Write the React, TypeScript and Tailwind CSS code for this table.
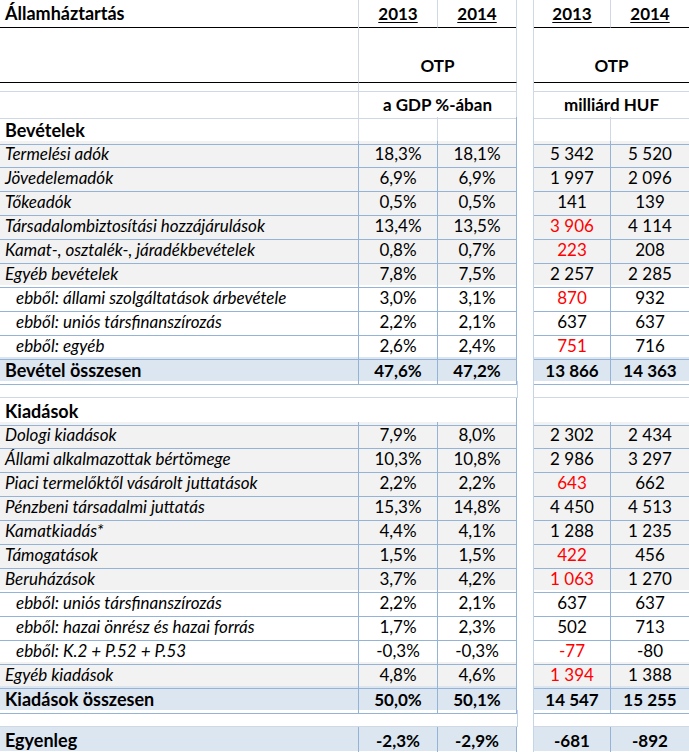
import React from 'react'

type Kind = 'main' | 'sub' | 'total' | 'section' | 'spacer'

type Row = {
  kind: Kind
  label?: string
  v?: [string, string, string, string]
  red?: boolean
}

const rows: Row[] = [
  { kind: 'section', label: 'Bevételek' },
  { kind: 'main', label: 'Termelési adók', v: ['18,3%', '18,1%', '5 342', '5 520'] },
  { kind: 'main', label: 'Jövedelemadók', v: ['6,9%', '6,9%', '1 997', '2 096'] },
  { kind: 'main', label: 'Tőkeadók', v: ['0,5%', '0,5%', '141', '139'] },
  { kind: 'main', label: 'Társadalombiztosítási hozzájárulások', v: ['13,4%', '13,5%', '3 906', '4 114'], red: true },
  { kind: 'main', label: 'Kamat-, osztalék-, járadékbevételek', v: ['0,8%', '0,7%', '223', '208'], red: true },
  { kind: 'main', label: 'Egyéb bevételek', v: ['7,8%', '7,5%', '2 257', '2 285'] },
  { kind: 'sub', label: 'ebből: állami szolgáltatások árbevétele', v: ['3,0%', '3,1%', '870', '932'], red: true },
  { kind: 'sub', label: 'ebből: uniós társfinanszírozás', v: ['2,2%', '2,1%', '637', '637'] },
  { kind: 'sub', label: 'ebből: egyéb', v: ['2,6%', '2,4%', '751', '716'], red: true },
  { kind: 'total', label: 'Bevétel összesen', v: ['47,6%', '47,2%', '13 866', '14 363'] },
  { kind: 'spacer' },
  { kind: 'section', label: 'Kiadások' },
  { kind: 'main', label: 'Dologi kiadások', v: ['7,9%', '8,0%', '2 302', '2 434'] },
  { kind: 'main', label: 'Állami alkalmazottak bértömege', v: ['10,3%', '10,8%', '2 986', '3 297'] },
  { kind: 'main', label: 'Piaci termelőktől vásárolt juttatások', v: ['2,2%', '2,2%', '643', '662'], red: true },
  { kind: 'main', label: 'Pénzbeni társadalmi juttatás', v: ['15,3%', '14,8%', '4 450', '4 513'] },
  { kind: 'main', label: 'Kamatkiadás*', v: ['4,4%', '4,1%', '1 288', '1 235'] },
  { kind: 'main', label: 'Támogatások', v: ['1,5%', '1,5%', '422', '456'], red: true },
  { kind: 'main', label: 'Beruházások', v: ['3,7%', '4,2%', '1 063', '1 270'], red: true },
  { kind: 'sub', label: 'ebből: uniós társfinanszírozás', v: ['2,2%', '2,1%', '637', '637'] },
  { kind: 'sub', label: 'ebből: hazai önrész és hazai forrás', v: ['1,7%', '2,3%', '502', '713'] },
  { kind: 'sub', label: 'ebből: K.2 + P.52 + P.53', v: ['-0,3%', '-0,3%', '-77', '-80'], red: true },
  { kind: 'main', label: 'Egyéb kiadások', v: ['4,8%', '4,6%', '1 394', '1 388'], red: true },
  { kind: 'total', label: 'Kiadások összesen', v: ['50,0%', '50,1%', '14 547', '15 255'] },
  { kind: 'spacer' },
  { kind: 'total', label: 'Egyenleg', v: ['-2,3%', '-2,9%', '-681', '-892'] },
]

const grid = 'grid grid-cols-[359px_79px_79px_17px_77px_78px]'

function DataRow({ row }: { row: Row }) {
  if (row.kind === 'spacer') {
    return (
      <div className={`${grid} h-[17px]`}>
        <div className="col-span-3 border-solid border-b border-[#d0d7e5]" />
        <div className="border-solid border-x border-[#c5d4e8]" />
        <div className="col-span-2 border-solid border-b border-[#d0d7e5]" />
      </div>
    )
  }

  if (row.kind === 'section') {
    const first = row.label === 'Bevételek'
    const vr = first ? 'border-r border-r-[#d0d7e5]' : ''
    return (
      <div className={`${grid} h-[24px]`}>
        <div className={`flex items-center pl-[5px] text-[18px] font-bold border-solid border-b border-b-[#95b3d7] ${vr}`}>
          {row.label}
        </div>
        <div className={`border-solid border-b border-b-[#95b3d7] ${vr}`} />
        <div className="border-solid border-b border-r border-[#95b3d7]" />
        <div className="border-solid border-r border-[#c5d4e8]" />
        <div className={`border-solid border-b border-b-[#95b3d7] ${vr}`} />
        <div className="border-solid border-b border-[#95b3d7]" />
      </div>
    )
  }

  const bg = row.kind === 'main' ? 'bg-[#f2f2f2]' : row.kind === 'total' ? 'bg-[#dce6f1]' : 'bg-white'
  const weight = row.kind === 'total' ? 'font-bold' : 'font-normal'
  const label =
    row.kind === 'total'
      ? 'font-bold text-[18px] pl-[5px]'
      : row.kind === 'sub'
        ? 'italic text-[17px] pl-[16px]'
        : 'italic text-[17px] pl-[5px]'
  const v = row.v!

  return (
    <div className={`${grid} h-[24px] ${bg}`}>
      <div className={`flex items-center border-solid border-b border-r border-[#95b3d7] ${label}`}>{row.label}</div>
      <div className={`flex items-center justify-center border-solid border-b border-r border-[#95b3d7] ${weight}`}>{v[0]}</div>
      <div className={`flex items-center justify-center border-solid border-b border-r border-[#95b3d7] ${weight}`}>{v[1]}</div>
      <div className="border-solid border-r border-[#c5d4e8] bg-white" />
      <div className={`flex items-center justify-center border-solid border-b border-r border-[#95b3d7] ${weight} ${row.red ? 'text-[#ff0000]' : ''}`}>
        {v[2]}
      </div>
      <div className={`flex items-center justify-center border-solid border-b border-[#95b3d7] ${weight}`}>{v[3]}</div>
    </div>
  )
}

export default function App() {
  return (
    <div className="w-[689px] h-[752px] bg-white text-black text-[17px] font-['Lato',sans-serif] overflow-hidden">
      {/* title row */}
      <div className={`${grid} h-[26px] font-bold`}>
        <div className="flex items-center pl-[5px] text-[18px] border-solid border-b border-r border-b-black border-r-[#d0d7e5]">Államháztartás</div>
        <div className="flex items-center justify-center underline underline-offset-2 border-solid border-b border-r border-b-black border-r-[#d0d7e5]">2013</div>
        <div className="flex items-center justify-center underline underline-offset-2 border-solid border-b border-r border-b-black border-r-[#d0d7e5]">2014</div>
        <div className="border-solid border-r border-[#d0d7e5]" />
        <div className="flex items-center justify-center underline underline-offset-2 border-solid border-b border-r border-b-black border-r-[#d0d7e5]">2013</div>
        <div className="flex items-center justify-center underline underline-offset-2 border-solid border-b border-b-black">2014</div>
      </div>

      {/* OTP row */}
      <div className={`${grid} h-[57px] font-bold`}>
        <div className="border-solid border-b border-r border-b-black border-r-[#d0d7e5]" />
        <div className="col-span-2 flex items-end justify-center pb-[4px] border-solid border-b border-r border-b-black border-r-[#d0d7e5]">OTP</div>
        <div className="border-solid border-r border-[#d0d7e5]" />
        <div className="col-span-2 flex items-end justify-center pb-[4px] border-solid border-b border-b-black">OTP</div>
      </div>

      {/* thin row */}
      <div className={`${grid} h-[9px]`}>
        <div className="border-solid border-b border-r border-[#d0d7e5]" />
        <div className="col-span-2 border-solid border-b border-r border-[#d0d7e5]" />
        <div className="border-solid border-r border-[#d0d7e5]" />
        <div className="col-span-2 border-solid border-b border-[#d0d7e5]" />
      </div>

      {/* unit row */}
      <div className={`${grid} h-[25px] font-bold`}>
        <div className="border-solid border-b border-r border-[#d0d7e5]" />
        <div className="col-span-2 flex items-center justify-center border-solid border-b border-r border-[#d0d7e5]">a GDP %-ában</div>
        <div className="border-solid border-r border-[#d0d7e5]" />
        <div className="col-span-2 flex items-center justify-center border-solid border-b border-[#d0d7e5]">milliárd HUF</div>
      </div>

      {rows.map((r, i) => (
        <DataRow key={i} row={r} />
      ))}
    </div>
  )
}
